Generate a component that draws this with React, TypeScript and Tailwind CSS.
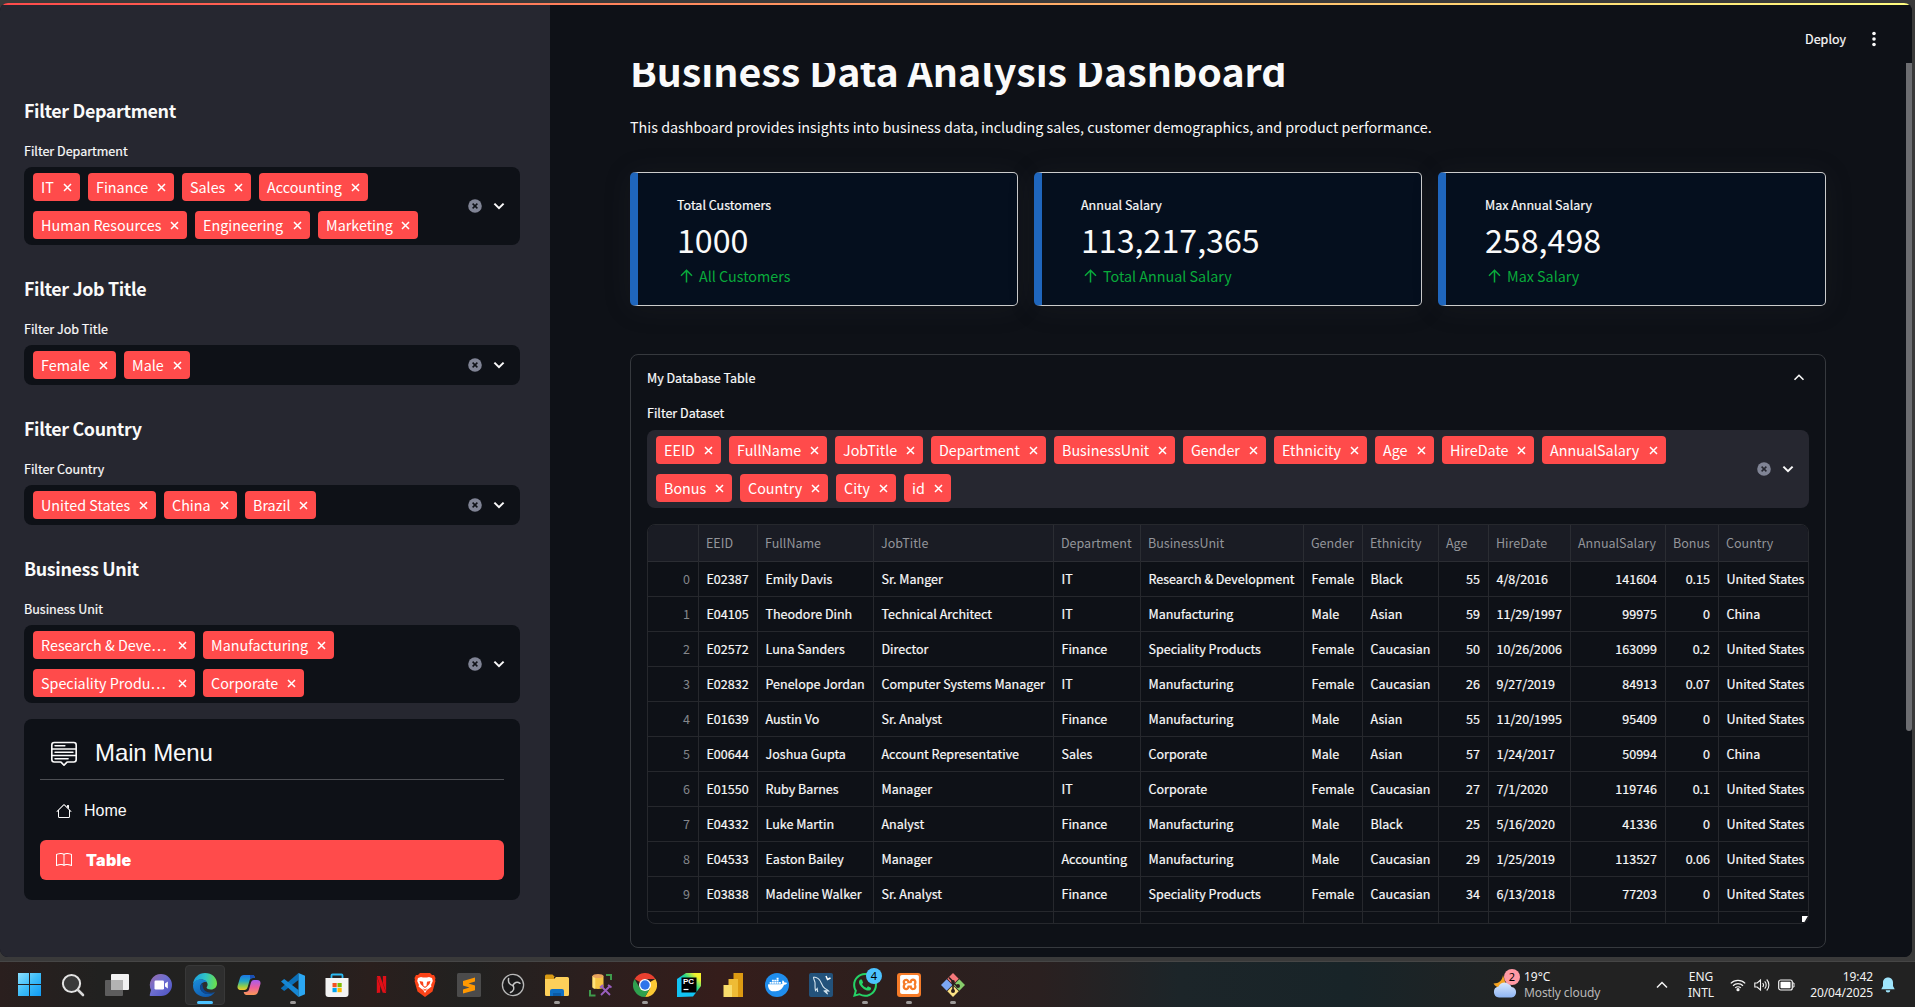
import React from "react";
import { BsMenuUp, BsBook } from "react-icons/bs";
import { SiNetflix, SiDocker, SiWhatsapp, SiXampp } from "react-icons/si";

type TagDef = [label: string, width: number];

function Tag({ label, width }: { label: string; width: number }) {
  return (
    <span
      className="flex h-7 items-center justify-between rounded-[4px] bg-[#ff4b4b] pr-[8px] pl-[8px] text-[14.33px] leading-7 whitespace-nowrap text-white"
      style={{ width }}
    >
      <span className="-mt-px">{label}</span>
      <svg width="9" height="9" viewBox="0 0 9 9" className="shrink-0" stroke="#fff" strokeWidth="1.5">
        <path d="M1 1l7 7M8 1l-7 7" />
      </svg>
    </span>
  );
}

function MultiSelect({ rows, dark }: { rows: TagDef[][]; dark: boolean }) {
  return (
    <div
      className={
        dark
          ? "flex items-center justify-between rounded-lg bg-[#0e1117] py-[6px] pr-[15px] pl-[9px]"
          : "flex items-center justify-between rounded-lg bg-[#262730] py-[6px] pr-[15px] pl-[9px]"
      }
    >
      <div className="flex flex-col gap-[10px]">
        {rows.map((row, i) => (
          <div key={i} className="flex gap-2">
            {row.map(([label, width]) => (
              <Tag key={label} label={label} width={width} />
            ))}
          </div>
        ))}
      </div>
      <div className="flex items-center gap-[11px]">
        <svg width="14" height="14" viewBox="0 0 14 14">
          <circle cx="7" cy="7" r="6.8" fill="#808495" />
          <path d="M4.6 4.6l4.8 4.8M9.4 4.6l-4.8 4.8" stroke={dark ? "#0e1117" : "#262730"} strokeWidth="1.5" />
        </svg>
        <svg width="12" height="12" viewBox="0 0 12 12" fill="none" stroke="#fafafa" strokeWidth="2">
          <path d="M1.4 3.6L6 8.2l4.6-4.6" />
        </svg>
      </div>
    </div>
  );
}

const filters: { heading: string; rows: TagDef[][] }[] = [
  {
    heading: "Filter Department",
    rows: [
      [["IT", 47], ["Finance", 86], ["Sales", 69], ["Accounting", 109]],
      [["Human Resources", 154], ["Engineering", 115], ["Marketing", 100]],
    ],
  },
  { heading: "Filter Job Title", rows: [[["Female", 83], ["Male", 66]]] },
  { heading: "Filter Country", rows: [[["United States", 123], ["China", 73], ["Brazil", 71]]] },
  {
    heading: "Business Unit",
    rows: [
      [["Research & Deve…", 162], ["Manufacturing", 131]],
      [["Speciality Produ…", 162], ["Corporate", 101]],
    ],
  },
];

const datasetTags: TagDef[][] = [
  [
    ["EEID", 65], ["FullName", 98], ["JobTitle", 88], ["Department", 115], ["BusinessUnit", 121],
    ["Gender", 83], ["Ethnicity", 93], ["Age", 59], ["HireDate", 92], ["AnnualSalary", 124],
  ],
  [["Bonus", 76], ["Country", 88], ["City", 60], ["id", 47]],
];

function HouseIcon() {
  return (
    <svg width="16" height="16" viewBox="0 0 16 16" fill="currentColor">
      <path
        fillRule="evenodd"
        d="M2 13.5V7h1v6.500a.5.5 0 0 0 .5.5h9a.5.5 0 0 0 .5-.5V7h1v6.500a1.500 1.500 0 0 1-1.500 1.500h-9A1.500 1.500 0 0 1 2 13.500zm11-11V6l-2-2V2.500a.5.5 0 0 1 .5-.5h1a.5.5 0 0 1 .5.5z"
      />
      <path
        fillRule="evenodd"
        d="M7.293 1.500a1 1 0 0 1 1.414 0l6.647 6.646a.5.5 0 0 1-.708.708L8 2.207 1.354 8.854a.5.5 0 1 1-.708-.708L7.293 1.500z"
      />
    </svg>
  );
}

function Sidebar() {
  return (
    <aside className="flex w-[550px] shrink-0 flex-col bg-[#262730] pt-[93px] pr-[30px] pl-6">
      <div className="flex flex-col gap-[31px]">
        {filters.map((f) => (
          <section key={f.heading}>
            <h3 className="text-[17.9px] leading-6 font-bold tracking-[-0.36px]">{f.heading}</h3>
            <p className="mt-[19px] mb-[6px] text-[12.53px] leading-5 [-webkit-text-stroke:0.2px]">{f.heading}</p>
            <MultiSelect rows={f.rows} dark />
          </section>
        ))}
      </div>
      <nav className="mt-4 h-[181px] rounded-lg bg-[#0e1117] px-4 pt-4 font-['Liberation_Sans',sans-serif]">
        <div className="flex h-[45px] items-center border-b border-[#4d4f54] pb-[9px] pl-[11px]">
          <BsMenuUp size={26} />
          <span className="ml-[18px] text-2xl leading-8 tracking-[-0.1px]">Main Menu</span>
        </div>
        <div className="mt-[11px] flex h-10 items-center pl-4 text-base">
          <HouseIcon />
          <span className="ml-3">Home</span>
        </div>
        <div className="mt-[9px] flex h-10 items-center rounded-md bg-[#ff4b4b] pl-4 text-base text-white">
          <BsBook size={16} />
          <span className="ml-[14px] font-['Inter',sans-serif] font-black tracking-[0.3px]">Table</span>
        </div>
      </nav>
    </aside>
  );
}

function MetricCard({ label, value, delta }: { label: string; value: string; delta: string }) {
  return (
    <div className="flex h-[134px] flex-1 flex-col rounded-[5px] border border-l-8 border-[#cccccc] border-l-[#1f66bd] bg-[#050f1e] pt-[22px] pl-[39px] shadow-[0_2px_28px_0_rgba(58,59,69,0.15)]">
      <p className="text-[12.53px] leading-5 [-webkit-text-stroke:0.2px]">{label}</p>
      <p className="mt-[2px] text-[32.2px] leading-[44px]">{value}</p>
      <p className="mt-[3px] flex items-center pl-[3px] text-[14.33px] leading-6 text-[#09ab3b]">
        <svg width="13" height="14" viewBox="0 0 13 14" fill="none" stroke="currentColor" strokeWidth="1.5">
          <path d="M6.5 13.5V1.2M1 6.7l5.500-5.500 5.500 5.500" />
        </svg>
        <span className="ml-[6px]">{delta}</span>
      </p>
    </div>
  );
}

const columns = [
  "", "EEID", "FullName", "JobTitle", "Department", "BusinessUnit", "Gender",
  "Ethnicity", "Age", "HireDate", "AnnualSalary", "Bonus", "Country",
];
const rightAligned = [0, 8, 10, 11];
const records = [
  ["0", "E02387", "Emily Davis", "Sr. Manger", "IT", "Research & Development", "Female", "Black", "55", "4/8/2016", "141604", "0.15", "United States"],
  ["1", "E04105", "Theodore Dinh", "Technical Architect", "IT", "Manufacturing", "Male", "Asian", "59", "11/29/1997", "99975", "0", "China"],
  ["2", "E02572", "Luna Sanders", "Director", "Finance", "Speciality Products", "Female", "Caucasian", "50", "10/26/2006", "163099", "0.2", "United States"],
  ["3", "E02832", "Penelope Jordan", "Computer Systems Manager", "IT", "Manufacturing", "Female", "Caucasian", "26", "9/27/2019", "84913", "0.07", "United States"],
  ["4", "E01639", "Austin Vo", "Sr. Analyst", "Finance", "Manufacturing", "Male", "Asian", "55", "11/20/1995", "95409", "0", "United States"],
  ["5", "E00644", "Joshua Gupta", "Account Representative", "Sales", "Corporate", "Male", "Asian", "57", "1/24/2017", "50994", "0", "China"],
  ["6", "E01550", "Ruby Barnes", "Manager", "IT", "Corporate", "Female", "Caucasian", "27", "7/1/2020", "119746", "0.1", "United States"],
  ["7", "E04332", "Luke Martin", "Analyst", "Finance", "Manufacturing", "Male", "Black", "25", "5/16/2020", "41336", "0", "United States"],
  ["8", "E04533", "Easton Bailey", "Manager", "Accounting", "Manufacturing", "Male", "Caucasian", "29", "1/25/2019", "113527", "0.06", "United States"],
  ["9", "E03838", "Madeline Walker", "Sr. Analyst", "Finance", "Speciality Products", "Female", "Caucasian", "34", "6/13/2018", "77203", "0", "United States"],
];
const gridCols = "grid grid-cols-[51px_59px_116px_180px_87px_163px_59px_76px_50px_82px_95px_53px_89px]";

function DataTable() {
  return (
    <div className="relative mt-4 h-[400px] overflow-hidden rounded-lg border border-[#26282d] text-[12.53px]">
      <div className={gridCols + " h-9 bg-[#1a1c24] text-[#93959a]"}>
        {columns.map((c, i) => (
          <div key={i} className="border-r border-b border-[#2b2d33] pl-[7px] leading-[36px] whitespace-nowrap last:border-r-0">
            {c}
          </div>
        ))}
      </div>
      {records.map((r) => (
        <div key={r[0]} className={gridCols + " h-[35px]"}>
          {r.map((cell, i) => (
            <div
              key={i}
              className={
                "border-r border-b border-[#26282d] leading-[35px] whitespace-nowrap last:border-r-0 " +
                (rightAligned.includes(i) ? "pr-[8px] text-right " : "pl-[7.5px] ") +
                (i === 0 ? "text-[#85878c]" : "[-webkit-text-stroke:0.2px]")
              }
            >
              {cell}
            </div>
          ))}
        </div>
      ))}
      <div className={gridCols + " h-[35px]"}>
        {columns.map((c, i) => (
          <div key={i} className="border-r border-[#26282d] last:border-r-0" />
        ))}
      </div>
      <svg className="absolute right-0 bottom-0" width="7" height="7" viewBox="0 0 7 7">
        <path d="M1 0h6L3.500 6H1z" fill="#fff" />
      </svg>
    </div>
  );
}

function MainPanel() {
  return (
    <main className="flex min-w-0 flex-1 flex-col bg-[#0e1117]">
      <header className="flex h-[58px] shrink-0 items-center justify-end pt-[10px] pr-[36px]">
        <span className="text-[12.53px] leading-5 [-webkit-text-stroke:0.2px]">Deploy</span>
        <svg className="ml-[26px]" width="4" height="16" viewBox="0 0 4 16" fill="#fafafa">
          <circle cx="2" cy="2.500" r="1.800" />
          <circle cx="2" cy="8" r="1.800" />
          <circle cx="2" cy="13.500" r="1.800" />
        </svg>
      </header>
      <div className="flex min-h-0 flex-1 overflow-hidden">
        <div className="min-w-0 flex-1 pl-20">
          <div className="w-[1196px]">
            <h1 className="-mt-[19px] text-[39.35px] leading-[52px] font-bold whitespace-nowrap">Business Data Analysis Dashboard</h1>
            <p className="mt-[19px] text-[14.33px] leading-6">
              This dashboard provides insights into business data, including sales, customer demographics, and product performance.
            </p>
            <div className="mt-[33px] flex gap-4">
              <MetricCard label="Total Customers" value="1000" delta="All Customers" />
              <MetricCard label="Annual Salary" value="113,217,365" delta="Total Annual Salary" />
              <MetricCard label="Max Annual Salary" value="258,498" delta="Max Salary" />
            </div>
            <section className="mt-12 h-[594px] rounded-lg border border-[#36393e] px-4">
              <div className="flex h-[46px] items-center justify-between pr-1">
                <span className="text-[12.53px] leading-5 [-webkit-text-stroke:0.2px]">My Database Table</span>
                <svg width="12" height="12" viewBox="0 0 12 12" fill="none" stroke="#fafafa" strokeWidth="1.600">
                  <path d="M1.500 7.800L6 3.300l4.500 4.500" />
                </svg>
              </div>
              <p className="mt-[2px] mb-[7px] text-[12.53px] leading-5 [-webkit-text-stroke:0.2px]">Filter Dataset</p>
              <MultiSelect rows={datasetTags} dark={false} />
              <DataTable />
            </section>
          </div>
        </div>
        <div className="w-[6px] shrink-0">
          <div className="h-[668px] rounded-b-[3px] bg-[#6c6d71]" />
        </div>
      </div>
    </main>
  );
}

function WindowsIcon() {
  return (
    <svg width="23" height="23" viewBox="0 0 23 23">
      <defs>
        <linearGradient id="win" x1="0" y1="0" x2="1" y2="1">
          <stop offset="0" stopColor="#8be0ff" />
          <stop offset="0.5" stopColor="#3dbdf8" />
          <stop offset="1" stopColor="#0f9af5" />
        </linearGradient>
      </defs>
      <path fill="url(#win)" d="M0 0h11v11H0zM12 0h11v11H12zM0 12h11v11H0zM12 12h11v11H12z" />
    </svg>
  );
}
function SearchIcon() {
  return (
    <svg width="24" height="24" viewBox="0 0 24 24" fill="none">
      <circle cx="10.500" cy="10.500" r="8.600" fill="#3a3a3a" stroke="#e4e4e4" strokeWidth="2" />
      <path d="M17 17l5 5" stroke="#d8d8d8" strokeWidth="2.600" strokeLinecap="round" />
    </svg>
  );
}
function TaskViewIcon() {
  return (
    <svg width="24" height="24" viewBox="0 0 24 24">
      <rect x="6" y="1" width="18" height="16" rx="1" fill="#f1f1f1" />
      <rect x="0" y="7" width="18" height="16" rx="1" fill="#5d5d5d" />
      <rect x="6" y="7" width="12" height="10" fill="#b3b3b3" />
    </svg>
  );
}
function ChatIcon() {
  return (
    <svg width="24" height="24" viewBox="0 0 24 24">
      <defs>
        <linearGradient id="chat" x1="0" y1="0" x2="1" y2="1">
          <stop offset="0" stopColor="#9a6ba8" />
          <stop offset="0.450" stopColor="#6e6fd0" />
          <stop offset="1" stopColor="#4b52c4" />
        </linearGradient>
      </defs>
      <path d="M12 1a11 11 0 1 1 0 22H1.500q-1 0-.8-1L2 17A11 11 0 0 1 12 1z" fill="url(#chat)" />
      <rect x="5.500" y="7.500" width="9.500" height="9" rx="1.200" fill="#fff" />
      <path d="M16 10.500l2.800-2v7l-2.800-2z" fill="#fff" />
    </svg>
  );
}
function EdgeIcon() {
  return (
    <svg width="26" height="26" viewBox="0 0 26 26">
      <defs>
        <linearGradient id="edgeA" x1="0" y1="0.300" x2="1" y2="0.400">
          <stop offset="0" stopColor="#1b9de2" />
          <stop offset="0.500" stopColor="#2fc3c6" />
          <stop offset="1" stopColor="#6be04a" />
        </linearGradient>
        <linearGradient id="edgeB" x1="0" y1="0" x2="0.600" y2="1">
          <stop offset="0" stopColor="#1b8fdc" />
          <stop offset="1" stopColor="#0f5bb0" />
        </linearGradient>
      </defs>
      <path d="M1 12.500C1.500 5.500 6.700 1 13 1c7 0 12 4.800 12 10.500 0 3.700-2.700 6-6 6-2.600 0-4.400-.9-4.400-2 0-.7 1-1.200 1-3C15.600 9.700 12.500 7.500 9.300 7.500 5.200 7.500 2 10 1 12.500z" fill="url(#edgeA)" />
      <path d="M1 13.500C1.500 9.500 5 7.300 8.800 7.300c3 0 5.200 1.300 6.200 3-4-1-6.800 1.700-6.800 5 0 4 4 6.700 8.200 6.700 2.600 0 4.700-.7 6.600-2C21 23 17.500 25 13.500 25 6.500 25 .8 20 1 13.500z" fill="url(#edgeB)" />
      <path d="M10.500 11.500c-1.700 1-2.300 2.600-2.300 3.900 0 4 4 6.600 8.200 6.600 2.600 0 4.700-.7 6.600-2-5 1.800-13 .5-12.500-8.500z" fill="#0b4894" />
    </svg>
  );
}
function CopilotIcon() {
  return (
    <svg width="24" height="24" viewBox="0 0 24 24">
      <defs>
        <linearGradient id="copA" x1="0" y1="0" x2="0" y2="1">
          <stop offset="0" stopColor="#1d77e6" />
          <stop offset="0.400" stopColor="#1fa6c8" />
          <stop offset="0.750" stopColor="#8fce4a" />
          <stop offset="1" stopColor="#f4c72b" />
        </linearGradient>
        <linearGradient id="copB" x1="0" y1="0" x2="0" y2="1">
          <stop offset="0" stopColor="#a65cf0" />
          <stop offset="0.500" stopColor="#ec5f9c" />
          <stop offset="1" stopColor="#fb9a55" />
        </linearGradient>
      </defs>
      <path d="M7 2h8.500c1.500 0 2 1 2.500 3h-2c-2 0-3 .8-3.600 3l-1.700 6c-.6 2-1.500 3-3.400 3H4c-3 0-4-2-3.300-4.500l2.200-7.300C3.600 3 5 2 7 2z" fill="url(#copA)" />
      <path d="M17 22H9.500C8 22 7 21 6.700 19H8.500c2 0 3-.8 3.600-3l1.700-6c.6-2 1.500-3 3.400-3H20c3 0 4 2 3.300 4.500l-2.200 7.300C20.400 21 19 22 17 22z" fill="url(#copB)" />
      <path d="M13 2h2.500c1.500 0 2 1 2.500 3h-2c-1.500 0-2.400.4-3 1.500z" fill="#1b4fb5" />
    </svg>
  );
}
function VSCodeIcon() {
  return (
    <svg width="24" height="24" viewBox="0 0 24 24">
      <path d="M17.500 0v7L3.200 18 0 15.600V14.900z" fill="#0b6fb8" />
      <path d="M0 8.400L3.200 6l14.300 11v7z" fill="#1687d4" />
      <path d="M17.500 0L24 2.800v18.400L17.500 24z" fill="#2ba7f3" />
    </svg>
  );
}
function StoreIcon() {
  return (
    <svg width="24" height="24" viewBox="0 0 24 24">
      <path d="M6.500 6V2.500q0-1 1-1h9q1 0 1 1V6" fill="none" stroke="#2ab9f2" strokeWidth="1.800" />
      <path d="M.5 5h23v16q0 3-3 3h-17q-3 0-3-3z" fill="#f3f3f3" />
      <path d="M7.500 10h4.200v4.200H7.500z" fill="#f25022" />
      <path d="M12.500 10h4.200v4.200h-4.200z" fill="#7fba00" />
      <path d="M7.500 15h4.200v4.200H7.500z" fill="#00a4ef" />
      <path d="M12.500 15h4.200v4.200h-4.200z" fill="#ffb900" />
    </svg>
  );
}
function BraveIcon() {
  return (
    <svg width="22" height="24" viewBox="0 0 22 24">
      <path d="M6 0h10l2 2h2l1.500 3-.5 2 .5 1-3 10.500L11 24l-7.500-5.500L.5 8 1 7 .500 5 2 2h2z" fill="#fb4318" />
      <path d="M4 5l3-1 2 .6h4L15 4l3 1 .8 3-1.800 4 .5 1.500-2.500 2-2.200 1.600L11 20l-1.800-2.900L7 15.500l-2.500-2L5 12 3.200 8z" fill="#fff" />
      <path d="M5.500 8l3.500.8.5 4 1.500 1 1.500-1 .5-4 3.500-.8-1 3-2.500 2.500L11 15l-2-1.500L6.500 11zM8.500 15.300L11 16.600l2.500-1.300-2.500 2.600z" fill="#fb4318" />
    </svg>
  );
}
function SublimeIcon() {
  return (
    <svg width="24" height="24" viewBox="0 0 24 24">
      <rect width="24" height="24" rx="1.500" fill="#4b4b4b" />
      <path d="M18 4.500v4l-6.500 2 6.500 2v4.800L6 20.500v-4l6.500-2L6 12.600V8z" fill="#ff9800" />
    </svg>
  );
}
function ObsIcon() {
  return (
    <svg width="24" height="24" viewBox="0 0 24 24" fill="none">
      <circle cx="12" cy="12" r="10.600" fill="#1b1a1b" stroke="#b9b9b9" strokeWidth="1.300" />
      <g stroke="#c6c6c6" strokeWidth="1.500" strokeLinecap="round">
        <path d="M12 12.500C9 12 6.800 9.800 7.600 5.500" />
        <path d="M12 12.500c1-2.900 4-4.400 7-2.200" />
        <path d="M12 12.500c1.600 2.500 1 5.500-2.600 7" />
      </g>
    </svg>
  );
}
function ExplorerIcon() {
  return (
    <svg width="26" height="24" viewBox="0 0 26 24">
      <path d="M1 3q0-1.500 1.500-1.500h6L11 4h-1v4H1z" fill="#d99a14" />
      <path d="M1 6h9l2-2h11.500q1.500 0 1.500 1.500V21.500q0 1.500-1.500 1.500h-21Q1 23 1 21.500z" fill="#fdd05a" />
      <path d="M6 23v-5q0-2 2-2h10q2 0 2 2v5z" fill="#0f6fc4" />
      <path d="M9 20h8v3H9z" fill="#0b5aa6" />
    </svg>
  );
}
function SsmsIcon() {
  return (
    <svg width="24" height="24" viewBox="0 0 24 24">
      <path d="M3.500 3v11c0 1.200 2.500 2 5.500 2s5.500-.8 5.500-2V3z" fill="#f6c544" />
      <path d="M3.500 3v11c0 1 1.200 1.600 2.800 1.900V3z" fill="#ffe27a" />
      <ellipse cx="9" cy="3" rx="5.500" ry="2" fill="#e9a25c" />
      <path d="M17 2h5v5M1 17v5.500h5.500" fill="none" stroke="#3f9b4c" strokeWidth="2" />
      <path d="M12 13l9 9M21.500 12.500L12 22M11 14.500l3-2.500M19 12l3.500 2.500" stroke="#9a5fc0" strokeWidth="1.800" />
    </svg>
  );
}
function ChromeIcon() {
  return (
    <svg width="24" height="24" viewBox="0 0 24 24">
      <path d="M12 12L1.600 6A12 12 0 0 1 22.400 6H12z" fill="#e8402f" />
      <path d="M12 12L22.400 6A12 12 0 0 1 12 24l5.200-9z" fill="#fcc934" />
      <path d="M1.600 6A12 12 0 0 0 12 24l5.200-9-5.200 3-5.200-3z" fill="#2fa04e" />
      <circle cx="12" cy="12" r="6" fill="#fff" />
      <circle cx="12" cy="12" r="4.700" fill="#2f74ea" />
    </svg>
  );
}
function PyCharmIcon() {
  return (
    <div className="relative h-6 w-6">
      <svg width="24" height="24" viewBox="0 0 24 24">
        <defs>
          <linearGradient id="pyc" x1="0" y1="1" x2="1" y2="0">
            <stop offset="0.450" stopColor="#12c3f4" />
            <stop offset="0.600" stopColor="#21d789" />
            <stop offset="0.850" stopColor="#f4f12c" />
          </linearGradient>
        </defs>
        <path d="M9 0h15v13l-8 10.500L2 24H0V6z" fill="url(#pyc)" />
        <path d="M4.500 4.500h15v15h-15z" fill="#000" />
        <path d="M6.500 16.500h5" stroke="#fff" strokeWidth="1.200" />
      </svg>
      <span className="absolute top-[5px] left-[6px] font-['Liberation_Sans',sans-serif] text-[8px] leading-[8px] font-bold text-white">PC</span>
    </div>
  );
}
function PowerBiIcon() {
  return (
    <svg width="20" height="24" viewBox="0 0 20 24">
      <path d="M10.500 0H20v24h-9.500z" fill="#dc9a12" />
      <path d="M5.500 6H15v18H5.500z" fill="#eebb35" />
      <path d="M.5 12H9v12H.5z" fill="#f8dc6b" />
    </svg>
  );
}
function DockerIcon() {
  return (
    <span className="flex h-6 w-6 items-center justify-center rounded-full bg-[#1f8ded]">
      <SiDocker size={19} color="#fff" />
    </span>
  );
}
function MySqlIcon() {
  return (
    <svg width="24" height="24" viewBox="0 0 24 24" fill="none">
      <rect width="24" height="24" rx="2" fill="#23527b" />
      <path d="M4.500 4c3 0 6.500 2.500 8 6.500 1 2.600 1.700 4.200 3.500 5 1.500.7 3 1.500 3.700 2.500l-3-.3 2 3.500-4-3.700M4.500 4c0 2.500 1.200 3.300 1.500 5.500.3 2.500-.4 5 .5 8l1.700-2 .5 3.500" stroke="#d5e4ee" strokeWidth="1.100" />
      <path d="M17 3l1.500 3.500L21.500 5" stroke="#fff" strokeWidth="1.500" />
    </svg>
  );
}
function WhatsappIcon() {
  return (
    <div className="relative h-6 w-6">
      <SiWhatsapp size={24} color="#25d366" />
      <span className="absolute -top-[5px] left-[13px] flex h-4 w-4 items-center justify-center rounded-full bg-[#4cc2ff] font-['Noto_Sans',sans-serif] text-[11px] leading-4 text-black">4</span>
    </div>
  );
}
function XamppIcon() {
  return (
    <span className="flex h-6 w-6 items-center justify-center rounded-[3px] bg-[#f67b28]">
      <SiXampp size={19} color="#fff" />
    </span>
  );
}
function GitIcon() {
  return (
    <svg width="24" height="24" viewBox="0 0 24 24">
      <path d="M12 0l5.700 5.700L12 11.400 6.300 5.700z" fill="#f4787a" />
      <path d="M5.700 6.300l5.700 5.700-5.700 5.700L0 12z" fill="#7ca7f4" />
      <path d="M18.300 6.300L24 12l-5.700 5.700-5.700-5.700z" fill="#86cc6b" />
      <path d="M12 12.600l5.700 5.700L12 24l-5.700-5.700z" fill="#fbe184" />
      <path d="M8 4.500l4 4v10M12 9.500l4.500 4" fill="none" stroke="#2b1d1c" strokeWidth="1.600" />
      <circle cx="12" cy="9" r="1.900" fill="#2b1d1c" />
      <circle cx="12" cy="18" r="2" fill="#2b1d1c" />
      <circle cx="17" cy="13" r="2" fill="#2b1d1c" />
    </svg>
  );
}

const apps: { icon: React.ReactNode; state?: "active" | "open" }[] = [
  { icon: <WindowsIcon /> },
  { icon: <SearchIcon /> },
  { icon: <TaskViewIcon /> },
  { icon: <ChatIcon /> },
  { icon: <EdgeIcon />, state: "active" },
  { icon: <CopilotIcon /> },
  { icon: <VSCodeIcon />, state: "open" },
  { icon: <StoreIcon /> },
  { icon: <SiNetflix size={17} color="#e00f17" /> },
  { icon: <BraveIcon /> },
  { icon: <SublimeIcon /> },
  { icon: <ObsIcon /> },
  { icon: <ExplorerIcon />, state: "open" },
  { icon: <SsmsIcon /> },
  { icon: <ChromeIcon />, state: "open" },
  { icon: <PyCharmIcon /> },
  { icon: <PowerBiIcon /> },
  { icon: <DockerIcon /> },
  { icon: <MySqlIcon /> },
  { icon: <WhatsappIcon />, state: "open" },
  { icon: <XamppIcon />, state: "open" },
  { icon: <GitIcon />, state: "open" },
];

function Taskbar() {
  return (
    <footer className="flex h-[46px] shrink-0 items-center justify-between border-t border-[#464646] bg-[linear-gradient(90deg,#2a1f1e_0px,#212120_100px,#222120_290px,#2a1f1d_370px,#212120_470px,#2b1f1e_580px,#351d1b_720px,#2d1f1d_880px,#2a2020_1040px,#1c2529_1180px,#182428_1350px,#1f2324_1480px,#222222_1560px)] pr-[20px] pl-[9px] font-['Noto_Sans',sans-serif] text-[12px] text-[#f3f3f3]">
      <div className="flex gap-1">
        {apps.map((app, i) => (
          <div
            key={i}
            className={
              app.state === "active"
                ? "relative flex h-10 w-10 items-center justify-center rounded border border-[#383838] bg-[#2e2e2e]"
                : "relative flex h-10 w-10 items-center justify-center"
            }
          >
            {app.icon}
            {app.state === "active" && <span className="absolute bottom-0 h-[3px] w-4 rounded-full bg-[#4cc2ff]" />}
            {app.state === "open" && <span className="absolute bottom-px h-[3px] w-[6px] rounded-full bg-[#9d9a99]" />}
          </div>
        ))}
      </div>
      <div className="flex items-center">
        <div className="relative h-7 w-6">
          <svg width="24" height="28" viewBox="0 0 24 28">
            <defs>
              <linearGradient id="cloud" x1="0" y1="0" x2="0" y2="1">
                <stop offset="0" stopColor="#dbe9fd" />
                <stop offset="1" stopColor="#8db4f3" />
              </linearGradient>
            </defs>
            <path d="M10 4c-.5 5-4 8.500-9.500 8.500C3 17 9 18 13 14z" fill="#f5a321" />
            <path d="M6 26.500a5.500 5.500 0 0 1-.5-10.900A7 7 0 0 1 18.500 16a5.300 5.300 0 0 1 0 10.500z" fill="url(#cloud)" />
          </svg>
          <span className="absolute -top-[2px] left-[11px] flex h-4 w-4 items-center justify-center rounded-full bg-[#ff99a4] text-[11px] leading-4 text-black">2</span>
        </div>
        <div className="ml-[7px] w-[88px] leading-4 whitespace-nowrap">
          <p>19°C</p>
          <p className="tracking-[-0.1px] text-[#b9b9b9]">Mostly cloudy</p>
        </div>
        <svg className="ml-[44px]" width="12" height="12" viewBox="0 0 12 12" fill="none" stroke="#f3f3f3" strokeWidth="1.500">
          <path d="M1 8.500l5-5 5 5" />
        </svg>
        <div className="ml-[20px] w-[26px] text-center leading-4">
          <p>ENG</p>
          <p>INTL</p>
        </div>
        <svg className="ml-[16px]" width="16" height="14" viewBox="0 0 16 14" fill="none" stroke="#f3f3f3" strokeWidth="1.200">
          <path d="M.8 5.300a10.200 10.200 0 0 1 14.400 0M3 7.700a7.100 7.100 0 0 1 10 0M5.200 9.900a4 4 0 0 1 5.600 0" />
          <circle cx="8" cy="11.700" r="1" fill="#f3f3f3" />
        </svg>
        <svg className="ml-2" width="16" height="14" viewBox="0 0 16 14" fill="none" stroke="#f3f3f3" strokeWidth="1.100">
          <path d="M.8 5v4h2.400l3.300 3V2L3.200 5zM8.700 5a3 3 0 0 1 0 4M10.700 3.300a5.300 5.300 0 0 1 0 7.400M12.700 1.500a8 8 0 0 1 0 11" />
        </svg>
        <svg className="ml-2" width="17" height="12" viewBox="0 0 17 12">
          <rect x=".7" y="1" width="13.600" height="10" rx="2" fill="none" stroke="#f3f3f3" strokeWidth="1.200" />
          <rect x="2.500" y="2.800" width="10" height="6.400" rx=".8" fill="#fff" />
          <path d="M15 4h1v4h-1" fill="none" stroke="#f3f3f3" />
        </svg>
        <div className="ml-[14px] w-[64px] text-right leading-4 tracking-[-0.1px] whitespace-nowrap">
          <p>19:42</p>
          <p>20/04/2025</p>
        </div>
        <svg className="ml-[8px]" width="14" height="16" viewBox="0 0 14 16" fill="#9fe4fb">
          <path d="M7 .500c3 0 5 2.200 5 5V9l1.700 3.300H.3L2 9V5.500c0-2.800 2-5 5-5zM4.700 13.300h4.600a2.300 2.300 0 0 1-4.600 0z" />
        </svg>
      </div>
    </footer>
  );
}

export default function App() {
  return (
    <div className="flex h-[1007px] w-[1915px] flex-col overflow-hidden bg-[#3a3a3a] pt-[3px] font-['Noto_Sans_CJK_SC',sans-serif] text-[#fafafa]">
      <div className="flex h-[954px] w-[1912px] shrink-0 flex-col overflow-hidden rounded-lg bg-[#0e1117]">
        <div className="h-[2px] shrink-0 bg-[linear-gradient(90deg,#ff4b4b,#fffd80)]" />
        <div className="flex min-h-0 flex-1">
          <Sidebar />
          <MainPanel />
        </div>
      </div>
      <div className="h-1 shrink-0" />
      <Taskbar />
    </div>
  );
}
